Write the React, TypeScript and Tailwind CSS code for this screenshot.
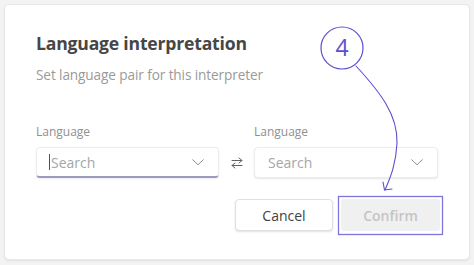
import React from "react";

const Chevron = () => (
  <svg width="12" height="7" viewBox="0 0 12 7" fill="none">
    <path d="M0.75 0.75 L6 5.75 L11.25 0.75" stroke="#8f8f8f" strokeWidth="1" strokeLinecap="round" strokeLinejoin="round" />
  </svg>
);

const Swap = () => (
  <svg width="12" height="12" viewBox="0 0 12 12" fill="none">
    <path d="M1 3.5 H11 M8 1 L11 3.5 L8 6" stroke="#616161" strokeWidth="1" strokeLinecap="round" strokeLinejoin="round" />
    <path d="M11 8.5 H1 M4 6 L1 8.5 L4 11" stroke="#616161" strokeWidth="1" strokeLinecap="round" strokeLinejoin="round" />
  </svg>
);

export default function App() {
  return (
    <div
      className="relative w-[474px] h-[265px] bg-[#f3f3f3] pt-[4px] pl-[4px]"
      style={{ fontFamily: '"Open Sans", "Noto Sans", sans-serif' }}
    >
      <div className="w-[466px] h-[256px] bg-white rounded-[5px] border border-[#e8e8e8] shadow-[0_1px_2px_rgba(0,0,0,0.08)] pt-[26px] pl-[31px] pr-[29px] flex flex-col">
        <div className="text-[17.6px] leading-[24px] font-bold text-[#464646] tracking-[-0.2px]">
          Language interpretation
        </div>
        <div className="mt-[10px] text-[13.6px] leading-[20px] text-[#9a9a9a] tracking-[-0.1px]">
          Set language pair for this interpreter
        </div>
        <div className="mt-[39px] flex items-end">
          <div className="flex flex-col w-[183px]">
            <div className="text-[12px] leading-[16px] text-[#8f8f8f]">Language</div>
            <div className="mt-[7px] h-[31px] rounded-[4px] border border-[#ececec] border-b-2 border-b-[#9a99bf] shadow-[0_1px_2px_rgba(0,0,0,0.08)] flex items-center pl-[12px] pr-[14px] bg-white">
              <span className="w-px h-[16px] bg-[#555] mr-[1px]" />
              <span className="flex-1 text-[14px] text-[#a6a6a6]">Search</span>
              <Chevron />
            </div>
          </div>
          <div className="w-[35px] h-[31px] flex items-center justify-center">
            <Swap />
          </div>
          <div className="flex flex-col w-[184px]">
            <div className="text-[12px] leading-[16px] text-[#8f8f8f]">Language</div>
            <div className="mt-[7px] h-[31px] rounded-[4px] border border-[#ececec] shadow-[0_1px_2px_rgba(0,0,0,0.1)] flex items-center pl-[13px] pr-[14px] bg-white">
              <span className="flex-1 text-[14px] text-[#a6a6a6]">Search</span>
              <Chevron />
            </div>
          </div>
        </div>
        <div className="mt-[21px] flex justify-end gap-[8px]">
          <button className="w-[98px] h-[32px] rounded-[4px] border border-[#e0e0e0] bg-white shadow-[0_1px_2px_rgba(0,0,0,0.12)] text-[14px] font-medium text-[#424242]">
            Cancel
          </button>
          <button className="w-[99px] h-[32px] rounded-[3px] bg-[#f0f0f0] text-[14px] font-semibold text-[#c4c4c4]">
            Confirm
          </button>
        </div>
      </div>

      {/* annotation overlay */}
      <svg className="absolute left-0 top-0" width="474" height="265" viewBox="0 0 474 265" fill="none">
        <circle cx="342" cy="48" r="21" stroke="#5a4fcf" strokeWidth="1.2" />
        <text x="342" y="56" textAnchor="middle" fontSize="23" fill="#5a4fcf" fontFamily="Open Sans, sans-serif">4</text>
        <path d="M356 66 C380 92 398 115 397 143 C396 165 390 178 385 190" stroke="#5a4fcf" strokeWidth="1.1" strokeLinecap="round" />
        <path d="M383 182 L384.5 190 L392 189" stroke="#5a4fcf" strokeWidth="1.1" strokeLinecap="round" strokeLinejoin="round" />
        <rect x="338.5" y="196.5" width="104" height="38" stroke="#7d74dc" strokeWidth="1.3" />
      </svg>
    </div>
  );
}
